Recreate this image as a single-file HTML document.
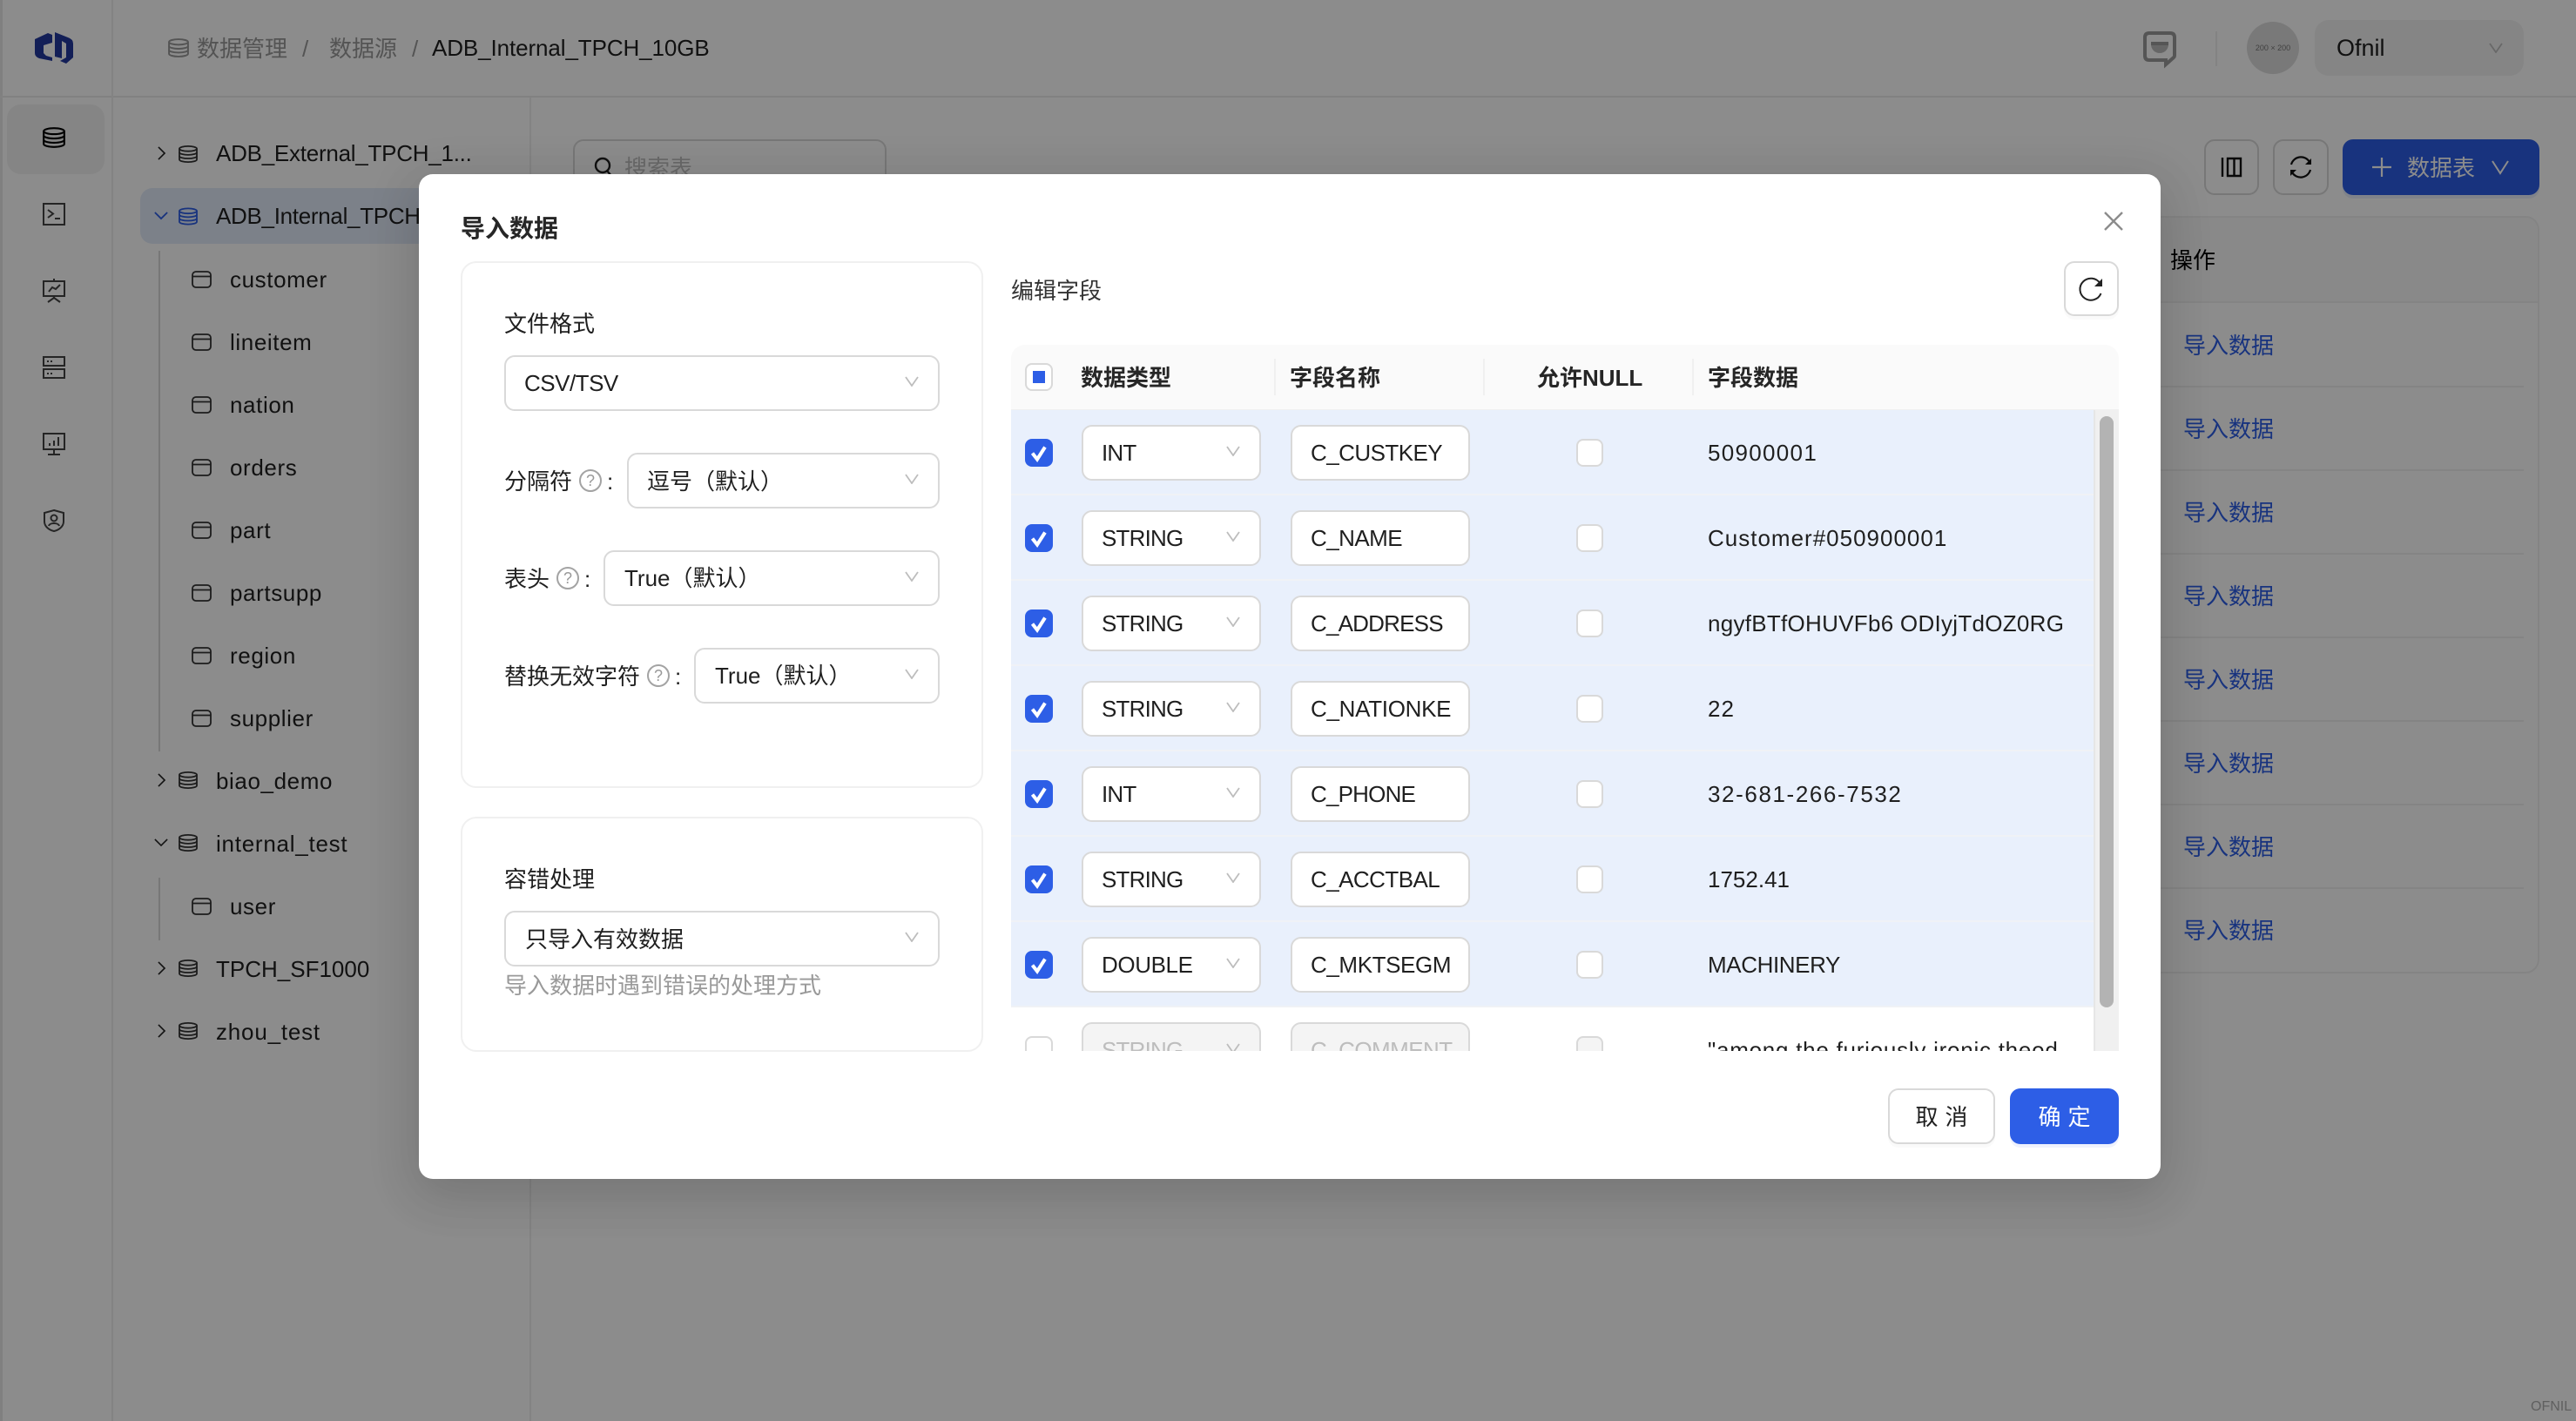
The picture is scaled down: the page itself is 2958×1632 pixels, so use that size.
<!DOCTYPE html>
<html lang="zh-CN"><head><meta charset="utf-8"><title>导入数据</title>
<style>
*{box-sizing:border-box}
html,body{margin:0;padding:0;width:2958px;height:1632px;overflow:hidden;background:#fff}
body{position:relative;font-family:"Liberation Sans","Noto Sans CJK SC",sans-serif;font-size:26px;color:#1f1f1f}
.a,.t{position:absolute}
.t{height:40px;line-height:40px;white-space:nowrap}
svg{position:absolute;display:block;overflow:visible}
.tree{color:#1f1f1f}
.lo{letter-spacing:.6px}
.lnk{color:#2d5ee6;left:2507px}
.sel{position:absolute;height:64px;background:#fff;border:2px solid #d9d9d9;border-radius:12px;line-height:61px;padding-left:21px;white-space:nowrap;overflow:hidden}
.sel svg{top:22px;right:22px;left:auto}
.row{position:absolute;left:0;width:1243px;height:98px;background:#e9f0fc;border-bottom:2px solid #f0f2f6}
.cb{position:absolute;left:16px;top:33px;width:32px;height:32px;border-radius:8px;background:#2d5ee6}
.cb.off{background:#fff;border:2px solid #d9d9d9}
.nc{position:absolute;left:649px;top:33px;width:31px;height:32px;border-radius:8px;background:#fff;border:2px solid #d9d9d9}
.ty{left:81px;top:17px;width:206px;height:64px;letter-spacing:-.8px}
.nm{left:321px;top:17px;width:206px;height:64px;letter-spacing:-.55px}
.nm div{width:163px;overflow:hidden}
.d{position:absolute;left:800px;top:0;line-height:98px;white-space:nowrap}
.dis .sel{background:#f4f4f4;color:#bdbdbd}
.dis{background:#fff;border:0}
.dis .nc{background:#f4f4f4}
.h{position:absolute;width:26px;height:26px;border:2px solid #a3a3a3;border-radius:50%;color:#999;font-size:18px;line-height:22px;text-align:center}
.th{font-weight:700;color:#262626}
.sep{position:absolute;width:2px;top:412px;height:42px;background:#f0f0f0}
</style></head><body>
<svg width="0" height="0" style="position:absolute"><defs>
<symbol id="chev" viewBox="0 0 16 12"><path d="M1 1L8 11L15 1" fill="none" stroke="#bdbdbd" stroke-width="1.8"/></symbol>
<symbol id="db" viewBox="0 0 22 20"><g fill="none" stroke="currentColor" stroke-width="1.8"><ellipse cx="11" cy="3.8" rx="10" ry="2.9"/><path d="M1 3.8V16.2C1 17.8 5.5 19.1 11 19.1S21 17.8 21 16.2V3.8"/><path d="M1 8C1 9.6 5.5 10.9 11 10.9S21 9.6 21 8"/><path d="M1 12.2C1 13.8 5.5 15 11 15S21 13.8 21 12.2"/></g></symbol>
<symbol id="tb" viewBox="0 0 23 20"><g fill="none" stroke="currentColor" stroke-width="1.8"><rect x="1" y="1" width="21" height="18" rx="4"/><path d="M1 6.5H22"/></g></symbol>
<symbol id="ck" viewBox="0 0 32 32"><path d="M8.5 16.5L14 23.5L23 9.5" fill="none" stroke="#fff" stroke-width="4"/></symbol>
</defs></svg>

<!-- underlying app -->
<div class="a" style="left:0;top:0;width:3px;height:1632px;background:#e9e9e9"></div>
<div class="a" style="left:0;top:110px;width:2958px;height:2px;background:#ececec"></div>
<div class="a" style="left:128px;top:0;width:2px;height:1632px;background:#efefef"></div>
<div class="a" style="left:608px;top:112px;width:2px;height:1520px;background:#efefef"></div>
<svg style="left:40px;top:37px" width="44" height="36" viewBox="0 0 44 36"><path d="M0 8L15 1L20 3V12L10 15V24L13 27L20 29V33L5 30Q0 28 0 24Z" fill="#243a9e"/><path d="M23 0L38 6Q44 8 44 13V29L36 36L29 33L36 29V13L31 10V30L23 28Z" fill="#243a9e"/></svg>

<!-- breadcrumb -->
<svg style="left:193px;top:43px;color:#999" width="24" height="24"><use href="#db" width="24" height="24"/></svg>
<div class="t" style="left:226px;top:36px;color:#999">数据管理</div>
<div class="t" style="left:347px;top:36px;color:#999">/</div>
<div class="t" style="left:378px;top:36px;color:#999">数据源</div>
<div class="t" style="left:473px;top:36px;color:#999">/</div>
<div class="t" style="left:496px;top:35px;letter-spacing:-.1px">ADB_Internal_TPCH_10GB</div>

<!-- top right -->
<svg style="left:2461px;top:36px" width="38" height="40" viewBox="0 0 38 40"><path d="M7 2H31Q36 2 36 7V28Q36 29 35 30L26 38V33H7Q2 33 2 28V7Q2 2 7 2Z" fill="none" stroke="#9b9b9b" stroke-width="4"/><path d="M9 13H29V15A10 10 0 0 1 9 15Z" fill="#bbb"/><path d="M9 12H29V16H9Z" fill="#9b9b9b"/></svg>
<div class="a" style="left:2544px;top:36px;width:2px;height:40px;background:#efefef"></div>
<div class="a" style="left:2580px;top:25px;width:60px;height:60px;border-radius:50%;background:#dcdcdc;color:#777;font-size:9px;line-height:60px;text-align:center">200 × 200</div>
<div class="a" style="left:2658px;top:23px;width:240px;height:64px;border-radius:16px;background:#f3f3f3"></div>
<div class="t" style="left:2683px;top:35px;font-size:27px">Ofnil</div>
<svg style="left:2858px;top:49px" width="16" height="12"><use href="#chev" width="16" height="12"/></svg>

<!-- nav -->
<div class="a" style="left:8px;top:120px;width:112px;height:80px;border-radius:16px;background:#f2f2f2"></div>
<svg style="left:49px;top:145px;color:#000" width="26" height="26"><use href="#db" width="26" height="26"/></svg>
<svg style="left:49px;top:233px" width="26" height="26" viewBox="0 0 26 26" fill="none" stroke="#444" stroke-width="2"><rect x="1" y="1" width="24" height="24"/><path d="M6 8L12 12.5L6 17M14 18H20"/></svg>
<svg style="left:49px;top:320px" width="26" height="28" viewBox="0 0 26 28" fill="none" stroke="#444" stroke-width="2"><path d="M13 0V3M1 3H25V20H1ZM13 20V22M6 27L13 22L20 27M7 15L11 10L15 12L20 7"/></svg>
<svg style="left:49px;top:409px" width="26" height="26" viewBox="0 0 26 26" fill="none" stroke="#444" stroke-width="2"><rect x="1" y="1" width="24" height="10"/><rect x="1" y="15" width="24" height="10"/><path d="M5 6H7M9 6H11M5 20H7M9 20H11"/></svg>
<svg style="left:49px;top:497px" width="26" height="26" viewBox="0 0 26 26" fill="none" stroke="#444" stroke-width="2"><rect x="1" y="1" width="24" height="18"/><path d="M13 19V25M6 25H20M8 15V12M13 15V9M18 15V5"/></svg>
<svg style="left:50px;top:585px" width="24" height="26" viewBox="0 0 24 26" fill="none" stroke="#444" stroke-width="2"><path d="M12 1L23 4V14C23 20 17 24 12 25C7 24 1 20 1 14V4Z"/><circle cx="12" cy="10" r="3.5"/><path d="M6 19C7 15 17 15 18 19"/></svg>

<!-- tree -->
<div class="a" style="left:161px;top:216px;width:447px;height:64px;border-radius:14px;background:#e2ebfa"></div>
<div class="a" style="left:182px;top:288px;width:2px;height:575px;background:#d9d9d9"></div>
<div class="a" style="left:182px;top:1008px;width:2px;height:72px;background:#d9d9d9"></div>
<svg style="left:181px;top:168px" width="9" height="16" viewBox="0 0 10 18"><path d="M1 1L9 9L1 17" fill="none" stroke="#222" stroke-width="1.8"/></svg>
<svg style="left:205px;top:167px;color:#333" width="22" height="20"><use href="#db" width="22" height="20"/></svg>
<div class="t tree" style="left:248px;top:156px;letter-spacing:-.25px">ADB_External_TPCH_1...</div>
<svg style="left:177px;top:243px" width="16" height="9" viewBox="0 0 18 10"><path d="M1 1L9 9L17 1" fill="none" stroke="#2d5ee6" stroke-width="2"/></svg>
<svg style="left:205px;top:238px;color:#2d5ee6" width="22" height="21"><use href="#db" width="22" height="21"/></svg>
<div class="t tree" style="left:248px;top:228px;letter-spacing:-.3px">ADB_Internal_TPCH_10GB</div>

<svg style="left:220px;top:311px;color:#333" width="23" height="20"><use href="#tb" width="23" height="20"/></svg><div class="t tree lo" style="left:264px;top:301px">customer</div>
<svg style="left:220px;top:383px;color:#333" width="23" height="20"><use href="#tb" width="23" height="20"/></svg><div class="t tree lo" style="left:264px;top:373px">lineitem</div>
<svg style="left:220px;top:455px;color:#333" width="23" height="20"><use href="#tb" width="23" height="20"/></svg><div class="t tree lo" style="left:264px;top:445px">nation</div>
<svg style="left:220px;top:527px;color:#333" width="23" height="20"><use href="#tb" width="23" height="20"/></svg><div class="t tree lo" style="left:264px;top:517px">orders</div>
<svg style="left:220px;top:599px;color:#333" width="23" height="20"><use href="#tb" width="23" height="20"/></svg><div class="t tree lo" style="left:264px;top:589px">part</div>
<svg style="left:220px;top:671px;color:#333" width="23" height="20"><use href="#tb" width="23" height="20"/></svg><div class="t tree lo" style="left:264px;top:661px">partsupp</div>
<svg style="left:220px;top:743px;color:#333" width="23" height="20"><use href="#tb" width="23" height="20"/></svg><div class="t tree lo" style="left:264px;top:733px">region</div>
<svg style="left:220px;top:815px;color:#333" width="23" height="20"><use href="#tb" width="23" height="20"/></svg><div class="t tree lo" style="left:264px;top:805px">supplier</div>

<svg style="left:181px;top:888px" width="9" height="16" viewBox="0 0 10 18"><path d="M1 1L9 9L1 17" fill="none" stroke="#222" stroke-width="1.8"/></svg>
<svg style="left:205px;top:886px;color:#333" width="22" height="20"><use href="#db" width="22" height="20"/></svg><div class="t tree lo" style="left:248px;top:877px">biao_demo</div>
<svg style="left:177px;top:963px" width="16" height="9" viewBox="0 0 18 10"><path d="M1 1L9 9L17 1" fill="none" stroke="#222" stroke-width="1.8"/></svg>
<svg style="left:205px;top:958px;color:#333" width="22" height="20"><use href="#db" width="22" height="20"/></svg><div class="t tree" style="left:248px;top:949px;letter-spacing:.75px">internal_test</div>
<svg style="left:220px;top:1031px;color:#333" width="23" height="20"><use href="#tb" width="23" height="20"/></svg><div class="t tree lo" style="left:264px;top:1021px">user</div>
<svg style="left:181px;top:1104px" width="9" height="16" viewBox="0 0 10 18"><path d="M1 1L9 9L1 17" fill="none" stroke="#222" stroke-width="1.8"/></svg>
<svg style="left:205px;top:1102px;color:#333" width="22" height="20"><use href="#db" width="22" height="20"/></svg><div class="t tree" style="left:248px;top:1093px">TPCH_SF1000</div>
<svg style="left:181px;top:1176px" width="9" height="16" viewBox="0 0 10 18"><path d="M1 1L9 9L1 17" fill="none" stroke="#222" stroke-width="1.8"/></svg>
<svg style="left:205px;top:1174px;color:#333" width="22" height="20"><use href="#db" width="22" height="20"/></svg><div class="t tree" style="left:248px;top:1165px;letter-spacing:.8px">zhou_test</div>

<!-- search + toolbar -->
<div class="a" style="left:658px;top:160px;width:360px;height:64px;border:2px solid #d9d9d9;border-radius:12px"></div>
<svg style="left:682px;top:180px" width="22" height="24" viewBox="0 0 22 24" fill="none" stroke="#222" stroke-width="2.4"><circle cx="10" cy="10" r="8"/><path d="M15 16L20 22"/></svg>
<div class="t" style="left:717px;top:173px;color:#bfbfbf">搜索表</div>
<div class="a" style="left:2531px;top:160px;width:63px;height:64px;border:2px solid #d9d9d9;border-radius:12px"></div>
<svg style="left:2550px;top:180px" width="25" height="24" viewBox="0 0 25 24" fill="none" stroke="#111" stroke-width="2.4"><path d="M2 1V23M8 2H23V22H8ZM15.5 2V22"/></svg>
<div class="a" style="left:2610px;top:160px;width:64px;height:64px;border:2px solid #d9d9d9;border-radius:12px"></div>
<svg style="left:2628px;top:178px" width="28" height="28" viewBox="0 0 28 28" fill="none" stroke="#111" stroke-width="2.2"><path d="M3 11A11.5 11.5 0 0 1 24 8M25 17A11.5 11.5 0 0 1 4 20"/><path d="M26 4V11H19Z" fill="#111" stroke="none"/><path d="M2 24V17H9Z" fill="#111" stroke="none"/></svg>
<div class="a" style="left:2690px;top:160px;width:226px;height:64px;border-radius:12px;background:#2d5ee6;box-shadow:0 4px 0 rgba(45,94,230,.1)"></div>
<svg style="left:2724px;top:181px" width="22" height="22" viewBox="0 0 22 22"><path d="M11 0V22M0 11H22" stroke="#fff" stroke-width="2.2"/></svg>
<div class="t" style="left:2764px;top:173px;color:#fff">数据表</div>
<svg style="left:2861px;top:184px" width="20" height="16" viewBox="0 0 20 16"><path d="M1 1L10 15L19 1" fill="none" stroke="#fff" stroke-width="2"/></svg>

<!-- background table -->
<div class="a" style="left:1000px;top:248px;width:1916px;height:870px;border:2px solid #f0f0f0;border-radius:16px"></div>
<div class="a" style="left:1002px;top:250px;width:1912px;height:98px;background:#fafafa;border-bottom:2px solid #f0f0f0;border-radius:14px 14px 0 0"></div>
<div class="t" style="left:2492px;top:279px;color:#000">操作</div>
<div class="t lnk" style="top:377px">导入数据</div>
<div class="t lnk" style="top:473px">导入数据</div>
<div class="t lnk" style="top:569px">导入数据</div>
<div class="t lnk" style="top:665px">导入数据</div>
<div class="t lnk" style="top:761px">导入数据</div>
<div class="t lnk" style="top:857px">导入数据</div>
<div class="t lnk" style="top:953px">导入数据</div>
<div class="t lnk" style="top:1049px">导入数据</div>
<div class="a" style="left:1000px;top:443px;width:1898px;height:2px;background:#f0f0f0"></div>
<div class="a" style="left:1000px;top:539px;width:1898px;height:2px;background:#f0f0f0"></div>
<div class="a" style="left:1000px;top:635px;width:1898px;height:2px;background:#f0f0f0"></div>
<div class="a" style="left:1000px;top:731px;width:1898px;height:2px;background:#f0f0f0"></div>
<div class="a" style="left:1000px;top:827px;width:1898px;height:2px;background:#f0f0f0"></div>
<div class="a" style="left:1000px;top:923px;width:1898px;height:2px;background:#f0f0f0"></div>
<div class="a" style="left:1000px;top:1019px;width:1898px;height:2px;background:#f0f0f0"></div>

<!-- overlay -->
<div class="a" style="left:0;top:0;width:2958px;height:1632px;background:rgba(0,0,0,.45)"></div>
<div class="t" style="left:2906px;top:1596px;font-size:16px;color:#5f5f5f">OFNIL</div>

<!-- modal -->
<div class="a" style="left:481px;top:200px;width:2000px;height:1154px;background:#fff;border-radius:16px;box-shadow:0 12px 56px 16px rgba(0,0,0,.06),0 18px 56px rgba(0,0,0,.1)"></div>
<div class="t" style="left:529px;top:243px;font-size:28px;font-weight:700;color:#262626">导入数据</div>
<svg style="left:2416px;top:243px" width="22" height="22" viewBox="0 0 22 22"><path d="M1 1L21 21M21 1L1 21" stroke="#8c8c8c" stroke-width="2.4"/></svg>

<div class="a" style="left:529px;top:300px;width:600px;height:605px;border:2px solid #f0f0f0;border-radius:18px"></div>
<div class="a" style="left:529px;top:938px;width:600px;height:270px;border:2px solid #f0f0f0;border-radius:18px"></div>

<div class="t" style="left:579px;top:352px">文件格式</div>
<div class="sel" style="left:579px;top:408px;width:500px;letter-spacing:-.5px">CSV/TSV<svg width="16" height="12"><use href="#chev" width="16" height="12"/></svg></div>

<div class="t" style="left:579px;top:533px">分隔符</div><div class="h" style="left:665px;top:539px">?</div><div class="t" style="left:697px;top:533px">:</div>
<div class="sel" style="left:720px;top:520px;width:359px;line-height:63px">逗号（默认）<svg width="16" height="12"><use href="#chev" width="16" height="12"/></svg></div>

<div class="t" style="left:579px;top:645px">表头</div><div class="h" style="left:639px;top:651px">?</div><div class="t" style="left:671px;top:645px">:</div>
<div class="sel" style="left:693px;top:632px;width:386px;padding-left:22px">True（默认）<svg width="16" height="12"><use href="#chev" width="16" height="12"/></svg></div>

<div class="t" style="left:579px;top:757px">替换无效字符</div><div class="h" style="left:743px;top:763px">?</div><div class="t" style="left:775px;top:757px">:</div>
<div class="sel" style="left:797px;top:744px;width:282px;padding-left:22px">True（默认）<svg width="16" height="12"><use href="#chev" width="16" height="12"/></svg></div>

<div class="t" style="left:579px;top:990px">容错处理</div>
<div class="sel" style="left:579px;top:1046px;width:500px;line-height:63px;padding-left:22px">只导入有效数据<svg width="16" height="12"><use href="#chev" width="16" height="12"/></svg></div>
<div class="t" style="left:579px;top:1112px;color:#999">导入数据时遇到错误的处理方式</div>

<!-- right -->
<div class="t" style="left:1161px;top:314px;color:#333">编辑字段</div>
<div class="a" style="left:2370px;top:300px;width:63px;height:63px;border:2px solid #d9d9d9;border-radius:12px;background:#fff;box-shadow:0 4px 0 rgba(0,0,0,.02)"></div>
<svg style="left:2385px;top:316px" width="32" height="32" viewBox="0 0 32 32" fill="none"><path d="M26.5 9.5A12.5 12.5 0 1 0 27.5 21" stroke="#222" stroke-width="2"/><path d="M29 4V13H20Z" fill="#222"/></svg>

<div class="a" style="left:1161px;top:396px;width:1272px;height:76px;background:#fafafa;border-bottom:2px solid #f0f0f0;border-radius:16px 16px 0 0"></div>
<div class="a" style="left:1177px;top:417px;width:32px;height:32px;background:#fff;border:2px solid #d9d9d9;border-radius:8px"></div>
<div class="a" style="left:1186px;top:426px;width:14px;height:14px;background:#2d5ee6"></div>
<div class="t th" style="left:1241px;top:414px">数据类型</div>
<div class="sep" style="left:1463px"></div>
<div class="t th" style="left:1481px;top:414px">字段名称</div>
<div class="sep" style="left:1703px"></div>
<div class="t th" style="left:1765px;top:414px;width:120px;text-align:center">允许NULL</div>
<div class="sep" style="left:1943px"></div>
<div class="t th" style="left:1961px;top:414px">字段数据</div>

<div class="a" style="left:1161px;top:471px;width:1272px;height:736px;overflow:hidden">
 <div class="row" style="top:0"><div class="cb"><svg width="32" height="32"><use href="#ck" width="32" height="32"/></svg></div><div class="sel ty">INT<svg width="16" height="12"><use href="#chev" width="16" height="12"/></svg></div><div class="sel nm"><div>C_CUSTKEY</div></div><div class="nc"></div><div class="d" style="letter-spacing:1.3px">50900001</div></div>
 <div class="row" style="top:98px"><div class="cb"><svg width="32" height="32"><use href="#ck" width="32" height="32"/></svg></div><div class="sel ty">STRING<svg width="16" height="12"><use href="#chev" width="16" height="12"/></svg></div><div class="sel nm"><div>C_NAME</div></div><div class="nc"></div><div class="d" style="letter-spacing:1px">Customer#050900001</div></div>
 <div class="row" style="top:196px"><div class="cb"><svg width="32" height="32"><use href="#ck" width="32" height="32"/></svg></div><div class="sel ty">STRING<svg width="16" height="12"><use href="#chev" width="16" height="12"/></svg></div><div class="sel nm" style="letter-spacing:-.8px"><div>C_ADDRESS</div></div><div class="nc"></div><div class="d" style="letter-spacing:.28px">ngyfBTfOHUVFb6 ODIyjTdOZ0RG</div></div>
 <div class="row" style="top:294px"><div class="cb"><svg width="32" height="32"><use href="#ck" width="32" height="32"/></svg></div><div class="sel ty">STRING<svg width="16" height="12"><use href="#chev" width="16" height="12"/></svg></div><div class="sel nm" style="letter-spacing:-.3px"><div>C_NATIONKE</div></div><div class="nc"></div><div class="d" style="letter-spacing:1px">22</div></div>
 <div class="row" style="top:392px"><div class="cb"><svg width="32" height="32"><use href="#ck" width="32" height="32"/></svg></div><div class="sel ty">INT<svg width="16" height="12"><use href="#chev" width="16" height="12"/></svg></div><div class="sel nm" style="letter-spacing:-.8px"><div>C_PHONE</div></div><div class="nc"></div><div class="d" style="letter-spacing:1.6px">32-681-266-7532</div></div>
 <div class="row" style="top:490px"><div class="cb"><svg width="32" height="32"><use href="#ck" width="32" height="32"/></svg></div><div class="sel ty">STRING<svg width="16" height="12"><use href="#chev" width="16" height="12"/></svg></div><div class="sel nm"><div>C_ACCTBAL</div></div><div class="nc"></div><div class="d">1752.41</div></div>
 <div class="row" style="top:588px"><div class="cb"><svg width="32" height="32"><use href="#ck" width="32" height="32"/></svg></div><div class="sel ty" style="letter-spacing:-.4px">DOUBLE<svg width="16" height="12"><use href="#chev" width="16" height="12"/></svg></div><div class="sel nm" style="letter-spacing:-.4px"><div>C_MKTSEGM</div></div><div class="nc"></div><div class="d" style="letter-spacing:-.4px">MACHINERY</div></div>
 <div class="row dis" style="top:686px"><div class="cb off"></div><div class="sel ty">STRING<svg width="16" height="12"><use href="#chev" width="16" height="12"/></svg></div><div class="sel nm"><div>C_COMMENT</div></div><div class="nc"></div><div class="d" style="color:#1f1f1f;letter-spacing:.75px">"among the furiously ironic theod</div></div>
 <div class="a" style="left:1243px;top:0;width:29px;height:736px;background:#f0f0f0;border-left:2px solid #e6e6e6"></div>
 <div class="a" style="left:1250px;top:7px;width:16px;height:679px;border-radius:8px;background:#b3b3b3"></div>
</div>

<!-- footer -->
<div class="a" style="left:2168px;top:1250px;width:123px;height:64px;border:2px solid #d9d9d9;border-radius:12px;background:#fff;box-shadow:0 4px 0 rgba(0,0,0,.02);text-align:center;line-height:62px;letter-spacing:8px;padding-left:8px">取消</div>
<div class="a" style="left:2308px;top:1250px;width:125px;height:64px;border-radius:12px;background:#2d5ee6;box-shadow:0 4px 0 rgba(45,94,230,.08);color:#fff;text-align:center;line-height:66px;letter-spacing:8px;padding-left:8px">确定</div>
</body></html>
